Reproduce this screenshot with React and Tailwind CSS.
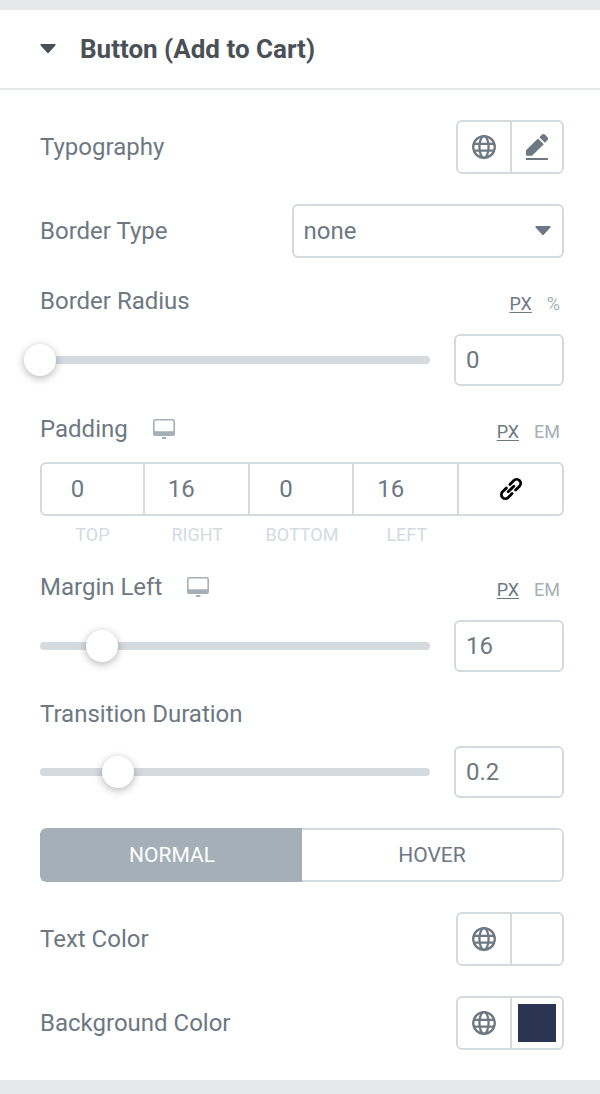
import { useState } from 'react';

const CaretIcon = ({ className }) => (
  <svg viewBox="0 0 16 10" className={className} fill="currentColor" aria-hidden="true">
    <path d="M1.2 0h13.6c.9 0 1.2.9.6 1.5L9 8.4a1.4 1.4 0 0 1-2 0L.6 1.5C0 .9.3 0 1.2 0z" />
  </svg>
);

const GlobeIcon = () => (
  <svg viewBox="0 0 24 24" className="h-6 w-6" fill="none" stroke="currentColor" strokeWidth="2.3" aria-hidden="true">
    <circle cx="12" cy="12" r="10.8" />
    <ellipse cx="12" cy="12" rx="4.6" ry="10.8" />
    <path d="M1.8 8.8h20.4M1.8 15.6h20.4" />
  </svg>
);

const PencilIcon = () => (
  <svg viewBox="0 0 24 28" className="h-7 w-6" fill="currentColor" aria-hidden="true">
    <path d="M1 17.2 13 5.4l5.8 5.8L7 22.8H2a1 1 0 0 1-1-1z" />
    <path d="M14.4 4.2l2.4-2.4a2.4 2.4 0 0 1 3.4 0l2.1 2.1a2.4 2.4 0 0 1 0 3.4l-2.4 2.4z" />
    <path d="M1 25h22v2H1z" />
  </svg>
);

const DesktopIcon = () => (
  <svg viewBox="0 0 22 20" className="h-5 w-[22px]" aria-hidden="true">
    <rect x=".8" y=".8" width="20.4" height="15.4" rx="1.8" fill="none" stroke="currentColor" strokeWidth="1.6" />
    <path d="M1 12.3h20V15a2 2 0 0 1-2 2H3a2 2 0 0 1-2-2zM9 18h4.4v2H9z" fill="currentColor" />
  </svg>
);

const LinkIcon = () => (
  <svg viewBox="0 0 24 24" className="h-6 w-6" fill="none" stroke="currentColor" strokeWidth="2.8" strokeLinecap="round" aria-hidden="true">
    <g transform="rotate(-45 12 12)">
      <path d="M9.5 8H4a4 4 0 0 0 0 8h5.5M14.5 8H20a4 4 0 0 1 0 8h-5.500M8 12h8" />
    </g>
  </svg>
);

const Row = ({ label, htmlFor, children }) => (
  <div className="flex items-center justify-between">
    {htmlFor ? <label htmlFor={htmlFor}>{label}</label> : <span>{label}</span>}
    {children}
  </div>
);

const Units = ({ units }) => {
  const [active, setActive] = useState(units[0]);

  return (
    <div className="flex gap-[15px] self-end pr-1 text-lg leading-5">
      {units.map((unit) => (
        <button
          key={unit}
          type="button"
          onClick={() => setActive(unit)}
          className={unit === active ? 'underline underline-offset-2' : 'text-[#a4afb7]'}
        >
          {unit}
        </button>
      ))}
    </div>
  );
};

const DeviceButton = () => (
  <button type="button" aria-label="Desktop" className="text-[#a4afb7]">
    <DesktopIcon />
  </button>
);

const SliderControl = ({ id, label, initial, max, step, units, responsive }) => {
  const [value, setValue] = useState(initial);

  return (
    <div>
      <div className={`flex items-center justify-between ${units ? 'h-[26px]' : ''}`}>
        <div className="flex items-center gap-[25px]">
          <label htmlFor={id}>{label}</label>
          {responsive && <DeviceButton />}
        </div>
        {units && <Units units={units} />}
      </div>
      <div className="mt-5 flex items-center gap-6">
        <div className="flex h-2 min-w-0 flex-1 items-center rounded-full bg-[#d5dadf]">
          <input
            type="range"
            aria-label={`${label} slider`}
            min="0"
            max={max}
            step={step}
            value={value}
            onChange={(e) => setValue(e.target.value)}
            className="-mx-4 h-8 w-[calc(100%+2rem)] shrink-0 cursor-pointer appearance-none bg-transparent [&::-webkit-slider-thumb]:h-8 [&::-webkit-slider-thumb]:w-8 [&::-webkit-slider-thumb]:appearance-none [&::-webkit-slider-thumb]:rounded-full [&::-webkit-slider-thumb]:bg-white [&::-webkit-slider-thumb]:shadow-[0_2px_8px_rgba(0,0,0,0.3)]"
          />
        </div>
        <input
          id={id}
          type="text"
          inputMode="decimal"
          value={value}
          onChange={(e) => setValue(e.target.value)}
          className="h-[52px] w-[110px] rounded-md border-2 border-[#d5dadf] px-2.5"
        />
      </div>
    </div>
  );
};

const sides = [
  { name: 'Top', value: 0 },
  { name: 'Right', value: 16 },
  { name: 'Bottom', value: 0 },
  { name: 'Left', value: 16 },
];

const PaddingControl = () => (
  <div>
    <div className="flex h-[26px] items-center justify-between">
      <div className="flex items-center gap-[25px]">
        <span>Padding</span>
        <DeviceButton />
      </div>
      <Units units={['PX', 'EM']} />
    </div>
    <div className="mt-5 grid grid-cols-5">
      {sides.map((side) => (
        <div key={side.name} className="group flex flex-col">
          <input
            id={`padding-${side.name}`}
            type="text"
            inputMode="numeric"
            defaultValue={side.value}
            className="h-[54px] w-full border-y-2 border-r-2 border-[#d5dadf] pr-[30px] text-center group-first:rounded-l-md group-first:border-l-2"
          />
          <label
            htmlFor={`padding-${side.name}`}
            className="mt-2.5 text-center text-lg leading-[18px] text-[#d5dadf] uppercase"
          >
            {side.name}
          </label>
        </div>
      ))}
      <button
        type="button"
        aria-label="Link values"
        className="flex h-[54px] items-center justify-center rounded-r-md border-y-2 border-r-2 border-[#d5dadf] text-black"
      >
        <LinkIcon />
      </button>
    </div>
  </div>
);

const ButtonPair = ({ label, children }) => (
  <div className="flex h-[54px] w-[108px] divide-x-2 divide-[#d5dadf] rounded-md border-2 border-[#d5dadf]">
    <button type="button" aria-label={`${label} globals`} className="flex w-[54px] items-center justify-center">
      <GlobeIcon />
    </button>
    <button type="button" aria-label={`Edit ${label}`} className="flex flex-1 items-center justify-center">
      {children}
    </button>
  </div>
);

const Tabs = () => {
  const [active, setActive] = useState('Normal');

  return (
    <div className="flex h-[54px] overflow-hidden rounded-md text-[21px]">
      {['Normal', 'Hover'].map((tab) => (
        <button
          key={tab}
          type="button"
          onClick={() => setActive(tab)}
          className={`flex-1 border-2 uppercase first:rounded-l-md first:border-r-0 last:rounded-r-md last:border-l-0 ${
            tab === active ? 'border-[#a4afb7] bg-[#a4afb7] text-white' : 'border-[#d5dadf]'
          }`}
        >
          {tab}
        </button>
      ))}
    </div>
  );
};

const App = () => {
  const [open, setOpen] = useState(true);

  return (
    <div className="min-h-screen bg-[#e6e8ec] pt-2.5 font-[Roboto,sans-serif] text-2xl leading-6 text-[#6d7882]">
      <section className="bg-white">
        <h2 className="border-b-2 border-[#e6e9ec]">
          <button
            type="button"
            onClick={() => setOpen(!open)}
            className="flex h-[78px] w-full items-center gap-6 px-10 text-[26px] font-bold text-[#495157]"
          >
            <CaretIcon className="h-2.5 w-4" />
            Button (Add to Cart)
          </button>
        </h2>

        {open && (
          <div className="flex flex-col gap-[30px] py-[30px] pr-9 pl-10">
            <Row label="Typography">
              <ButtonPair label="Typography">
                <PencilIcon />
              </ButtonPair>
            </Row>

            <Row label="Border Type" htmlFor="border-type">
              <div className="relative w-[52%]">
                <select
                  id="border-type"
                  className="h-[54px] w-full appearance-none rounded-md border-2 border-[#d5dadf] bg-white px-2.5"
                >
                  <option>none</option>
                  <option>solid</option>
                  <option>dashed</option>
                </select>
                <CaretIcon className="pointer-events-none absolute top-[22px] right-[13px] h-2.5 w-4" />
              </div>
            </Row>

            <SliderControl id="radius" label="Border Radius" initial="0" max="100" step="1" units={['PX', '%']} />
            <PaddingControl />
            <SliderControl id="margin" label="Margin Left" initial="16" max="100" step="1" units={['PX', 'EM']} responsive />
            <SliderControl id="duration" label="Transition Duration" initial="0.2" max="1" step="0.1" />
            <Tabs />

            <Row label="Text Color">
              <ButtonPair label="Text Color">
                <span className="h-[38px] w-[38px] bg-white" />
              </ButtonPair>
            </Row>

            <Row label="Background Color">
              <ButtonPair label="Background Color">
                <span className="h-[38px] w-[38px] bg-[#2b3553]" />
              </ButtonPair>
            </Row>
          </div>
        )}
      </section>
    </div>
  );
};

export default App;
